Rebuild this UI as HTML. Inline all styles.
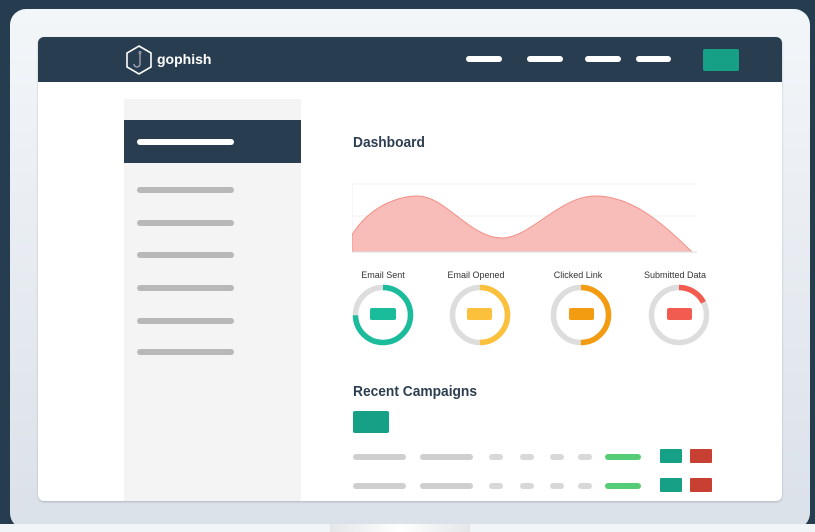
<!DOCTYPE html>
<html><head><style>
*{margin:0;padding:0;box-sizing:border-box}
body{width:815px;height:532px;background:#263d4f;position:relative;overflow:hidden;font-family:"Liberation Sans",sans-serif}
.bezel{position:absolute;left:10px;top:9px;width:800px;height:520px;border-radius:16px;background:linear-gradient(#f3f6f9,#dbe1e9)}
.stand{position:absolute;left:0;top:524px;width:815px;height:8px;background:#f2f5f8}
.stand2{position:absolute;left:330px;top:524px;width:140px;height:8px;background:linear-gradient(90deg,#e4e6e8,#fff,#e4e6e8)}
.screen{position:absolute;left:38px;top:37px;width:744px;height:464px;background:#fff;border-radius:6px;overflow:hidden;box-shadow:0 1px 2px rgba(0,0,0,.2)}
.nav{position:absolute;left:0;top:0;width:744px;height:45px;background:#283e50}
.pill{position:absolute;height:6px;background:#fff;border-radius:3px;top:19px}
.side{position:absolute;left:86px;top:62px;width:177px;height:410px;background:#f4f4f4}
.act{position:absolute;left:0;top:21px;width:177px;height:43px;background:#283e50}
.sb{position:absolute;left:13px;width:97px;height:6px;border-radius:3px;background:#b8b8b8}
h2{position:absolute;font-size:14.5px;font-weight:bold;color:#2c3e50;transform:scaleX(.95);transform-origin:left}
.lbl{position:absolute;font-size:9px;color:#333;width:90px;text-align:center}
.g{position:absolute;height:6px;border-radius:3px;background:#cfcfcf}
</style></head><body>
<div class="bezel"></div>
<div class="stand"></div><div class="stand2"></div>
<div class="screen">
 <div class="nav">
  <svg style="position:absolute;left:87px;top:8px" width="28" height="30" viewBox="0 0 28 30"><polygon points="14,1 26,8 26,22 14,29 2,22 2,8" fill="none" stroke="#fff" stroke-width="1.6"/><path d="M15 8 V19 a3 3 0 0 1 -6 0" fill="none" stroke="#aab" stroke-width="1.3"/><circle cx="15" cy="7.5" r="1" fill="none" stroke="#aab"/></svg>
  <div style="position:absolute;left:119px;top:14px;color:#fff;font-weight:bold;font-size:14px">gophish</div>
  <div class="pill" style="left:428px;width:36px"></div>
  <div class="pill" style="left:489px;width:36px"></div>
  <div class="pill" style="left:547px;width:36px"></div>
  <div class="pill" style="left:598px;width:35px"></div>
  <div style="position:absolute;left:665px;top:12px;width:36px;height:22px;background:#16a085;border-radius:2px"></div>
 </div>
 <div class="side">
  <div class="act"><div class="sb" style="top:19px;background:#fff"></div></div>
  <div class="sb" style="top:88px"></div>
  <div class="sb" style="top:121px"></div>
  <div class="sb" style="top:153px"></div>
  <div class="sb" style="top:186px"></div>
  <div class="sb" style="top:219px"></div>
  <div class="sb" style="top:250px"></div>
 </div>
 <h2 style="left:315px;top:98px">Dashboard</h2>
 <svg style="position:absolute;left:314px;top:145px" width="346" height="72" viewBox="352 182 346 72">
  <line x1="352" y1="184" x2="697" y2="184" stroke="#f0f0f0"/>
  <line x1="352" y1="216" x2="697" y2="216" stroke="#f0f0f0"/>
  <line x1="352" y1="184" x2="352" y2="252" stroke="#eee"/>
  <path d="M352 235 C370 205,400 196,418 196 C445 196,470 238,502 238 C530 238,560 196,595 196 C630 196,660 220,692 252 L352 252Z" fill="#f8bdb8" stroke="#f08f86" stroke-width="1"/>
  <line x1="352" y1="252" x2="697" y2="252" stroke="#ddd"/>
 </svg>
 <div class="lbl" style="left:300px;top:233px">Email Sent</div>
 <div class="lbl" style="left:393px;top:233px">Email Opened</div>
 <div class="lbl" style="left:495px;top:233px">Clicked Link</div>
 <div class="lbl" style="left:592px;top:233px">Submitted Data</div>
 <svg style="position:absolute;left:0;top:0" width="744" height="464" viewBox="38 37 744 464">
  <g fill="none" stroke-width="5.5">
   <circle cx="383" cy="315" r="27.5" stroke="#ddd"/>
   <circle cx="383" cy="315" r="27.5" stroke="#1abc9c" stroke-dasharray="129 200" transform="rotate(-90 383 315)"/>
   <circle cx="480" cy="315" r="27.5" stroke="#ddd"/>
   <circle cx="480" cy="315" r="27.5" stroke="#fbc13d" stroke-dasharray="86.4 200" transform="rotate(-90 480 315)"/>
   <circle cx="581" cy="315" r="27.5" stroke="#ddd"/>
   <circle cx="581" cy="315" r="27.5" stroke="#f39c12" stroke-dasharray="86.4 200" transform="rotate(-90 581 315)"/>
   <circle cx="679" cy="315" r="27.5" stroke="#ddd"/>
   <circle cx="679" cy="315" r="27.5" stroke="#f15b50" stroke-dasharray="30 200" transform="rotate(-90 679 315)"/>
  </g>
  <rect x="370" y="308" width="26" height="12" rx="2" fill="#1abc9c"/>
  <rect x="467" y="308" width="25" height="12" rx="2" fill="#fbc13d"/>
  <rect x="569" y="308" width="25" height="12" rx="2" fill="#f39c12"/>
  <rect x="667" y="308" width="25" height="12" rx="2" fill="#f15b50"/>
 </svg>
 <h2 style="left:315px;top:347px">Recent Campaigns</h2>
 <div style="position:absolute;left:315px;top:374px;width:36px;height:22px;background:#16a085;border-radius:2px"></div>
 <div style="position:absolute;left:0;top:417px">
  <div class="g" style="left:315px;width:53px"></div><div class="g" style="left:382px;width:53px"></div>
  <div class="g" style="left:451px;width:14px;background:#d8d8d8"></div><div class="g" style="left:482px;width:14px;background:#d8d8d8"></div>
  <div class="g" style="left:512px;width:14px;background:#d8d8d8"></div><div class="g" style="left:540px;width:14px;background:#d8d8d8"></div>
  <div class="g" style="left:567px;width:36px;background:#55cc75"></div>
  <div style="position:absolute;left:622px;top:-5px;width:22px;height:14px;background:#16a085;border-radius:1px"></div>
  <div style="position:absolute;left:652px;top:-5px;width:22px;height:14px;background:#c84032;border-radius:1px"></div>
 </div>
 <div style="position:absolute;left:0;top:446px">
  <div class="g" style="left:315px;width:53px"></div><div class="g" style="left:382px;width:53px"></div>
  <div class="g" style="left:451px;width:14px;background:#d8d8d8"></div><div class="g" style="left:482px;width:14px;background:#d8d8d8"></div>
  <div class="g" style="left:512px;width:14px;background:#d8d8d8"></div><div class="g" style="left:540px;width:14px;background:#d8d8d8"></div>
  <div class="g" style="left:567px;width:36px;background:#55cc75"></div>
  <div style="position:absolute;left:622px;top:-5px;width:22px;height:14px;background:#16a085;border-radius:1px"></div>
  <div style="position:absolute;left:652px;top:-5px;width:22px;height:14px;background:#c84032;border-radius:1px"></div>
 </div>
</div>
</body></html>
